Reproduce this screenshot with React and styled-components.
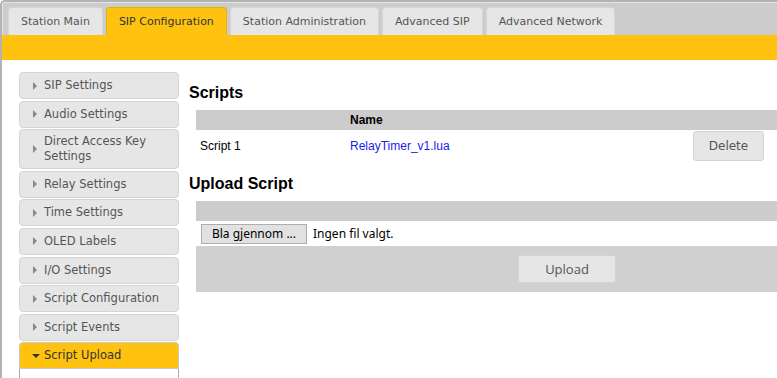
import React from "react";
import styled, { createGlobalStyle } from "styled-components";

const GlobalStyle = createGlobalStyle`
  html, body {
    margin: 0;
    padding: 0;
    background: #fff;
    overflow: hidden;
  }
  body {
    font-family: "Liberation Sans", Arial, sans-serif;
  }
`;

const Frame = styled.div`
  height: 100vh;
  overflow: hidden;
  border-left: 2px solid #b3b3b3;
  border-top: 2px solid #b3b3b3;
  border-top-left-radius: 5px;
  box-sizing: border-box;
`;

const TabBar = styled.nav`
  display: flex;
  align-items: flex-end;
  gap: 3px;
  height: 33px;
  padding-left: 5px;
  background: #cccccc;
  border-top: 1px solid #e4e4e4;
  border-left: 1px solid #e4e4e4;
  box-sizing: border-box;
`;

const Tab = styled.div`
  height: 28px;
  display: flex;
  align-items: center;
  padding: 0 12px;
  box-sizing: border-box;
  border: 1px solid ${(p) => (p.$active ? "#e3b10f" : "#d6d6d6")};
  border-bottom: none;
  border-radius: 4px 4px 0 0;
  background: ${(p) => (p.$active ? "#ffc20e" : "#e6e6e6")};
  color: ${(p) => (p.$active ? "#333" : "#555")};
  font-family: "DejaVu Sans", Verdana, sans-serif;
  font-size: 11px;
  white-space: nowrap;
`;

const Band = styled.div`
  height: 25px;
  background: #ffc20e;
`;

const Body = styled.div`
  display: flex;
  align-items: flex-start;
  padding: 12px 0 0 17px;
`;

const SideNav = styled.aside`
  width: 160px;
  flex: none;
  display: flex;
  flex-direction: column;
  gap: 1.6px;
`;

const NavItem = styled.div`
  display: flex;
  align-items: center;
  min-height: 27px;
  box-sizing: border-box;
  padding: 4px 8px 4px 13px;
  border: 1px solid ${(p) => (p.$active ? "#c9c9c9" : "#d5d5d5")};
  border-radius: ${(p) => (p.$active ? "4px 4px 0 0" : "4px")};
  background: ${(p) => (p.$active ? "#ffc20e" : "#e6e6e6")};
  color: ${(p) => (p.$active ? "#333" : "#555")};
  font-family: "DejaVu Sans", Verdana, sans-serif;
  font-size: 11.5px;
  line-height: 15px;
`;

const Arrow = styled.span`
  flex: none;
  width: 0;
  height: 0;
  ${(p) =>
    p.$open
      ? `border-left: 4px solid transparent;
         border-right: 4px solid transparent;
         border-top: 4px solid #333;
         margin-left: -1px;
         margin-right: 4px;`
      : `border-top: 4px solid transparent;
         border-bottom: 4px solid transparent;
         border-left: 4px solid #888;
         margin-left: 0;
         margin-right: 7px;`}
`;

const SubPanel = styled.div`
  height: 40px;
  border: 1px solid #a9a9a9;
  border-top: none;
  background: #fff;
`;

const Main = styled.main`
  flex: 1;
  min-width: 0;
  margin-left: 10px;
  padding-top: 12px;
`;

const Heading = styled.h3`
  margin: 0 0 8px;
  font-size: 16px;
  line-height: 18px;
  font-weight: bold;
  color: #000;
`;

const Table = styled.div`
  margin-left: 7px;
  margin-bottom: ${(p) => p.$mb || 0}px;
  font-size: 12px;
  color: #000;
`;

const Row = styled.div`
  display: grid;
  grid-template-columns: 154px 343px 1fr;
  align-items: center;
  height: ${(p) => p.$h}px;
  background: ${(p) => p.$bg || "transparent"};
`;

const Cell = styled.div`
  padding-left: ${(p) => p.$pl ?? 4}px;
  font-weight: ${(p) => (p.$bold ? "bold" : "normal")};
`;

const FileLink = styled.a`
  color: #1a1aee;
  text-decoration: none;
`;

const SoftButton = styled.button`
  height: ${(p) => p.$h}px;
  width: ${(p) => p.$w}px;
  border: 1px solid #d4d4d4;
  border-radius: 3px;
  background: #e6e6e6;
  color: #555;
  font-family: ${(p) => (p.$open ? '"Open Sans", sans-serif' : '"DejaVu Sans", Verdana, sans-serif')};
  font-size: ${(p) => (p.$open ? 13 : 12)}px;
  padding: 0;
`;

const FileRow = styled.div`
  display: flex;
  align-items: center;
  gap: 6px;
  height: 25px;
  padding-left: 5px;
  font-family: "Noto Sans", sans-serif;
  font-size: 12px;
`;

const FileButton = styled.button`
  height: 20px;
  width: 106px;
  border: 1px solid #adadad;
  background: #e1e1e1;
  font-family: "Noto Sans", sans-serif;
  font-size: 12px;
  color: #000;
  padding: 0;
`;

const Footer = styled.div`
  display: flex;
  align-items: center;
  height: 46px;
  padding-left: 322px;
  background: #d0d0d0;
`;

const tabs = [
  { label: "Station Main" },
  { label: "SIP Configuration", active: true },
  { label: "Station Administration" },
  { label: "Advanced SIP" },
  { label: "Advanced Network" },
];

const navItems = [
  "SIP Settings",
  "Audio Settings",
  "Direct Access Key Settings",
  "Relay Settings",
  "Time Settings",
  "OLED Labels",
  "I/O Settings",
  "Script Configuration",
  "Script Events",
];

const App = () => {
  return (
    <>
      <GlobalStyle />
      <Frame>
        <TabBar>
          {tabs.map((t) => (
            <Tab key={t.label} $active={t.active}>
              {t.label}
            </Tab>
          ))}
        </TabBar>
        <Band />
        <Body>
          <SideNav>
            {navItems.map((label) => (
              <NavItem key={label}>
                <Arrow />
                <span>{label}</span>
              </NavItem>
            ))}
            <div>
              <NavItem $active>
                <Arrow $open />
                <span>Script Upload</span>
              </NavItem>
              <SubPanel />
            </div>
          </SideNav>
          <Main>
            <Heading>Scripts</Heading>
            <Table $mb={13}>
              <Row $h={20} $bg="#cccccc">
                <Cell />
                <Cell $bold $pl={0}>Name</Cell>
                <Cell />
              </Row>
              <Row $h={32}>
                <Cell>Script 1</Cell>
                <Cell $pl={0}>
                  <FileLink href="#">RelayTimer_v1.lua</FileLink>
                </Cell>
                <Cell $pl={0}>
                  <SoftButton $w={71} $h={30}>Delete</SoftButton>
                </Cell>
              </Row>
            </Table>
            <Heading>Upload Script</Heading>
            <Table>
              <Row $h={20} $bg="#cccccc" />
              <FileRow>
                <FileButton>Bla gjennom ...</FileButton>
                <span>Ingen fil valgt.</span>
              </FileRow>
              <Footer>
                <SoftButton $open $w={98} $h={28}>Upload</SoftButton>
              </Footer>
            </Table>
          </Main>
        </Body>
      </Frame>
    </>
  );
};

export default App;
